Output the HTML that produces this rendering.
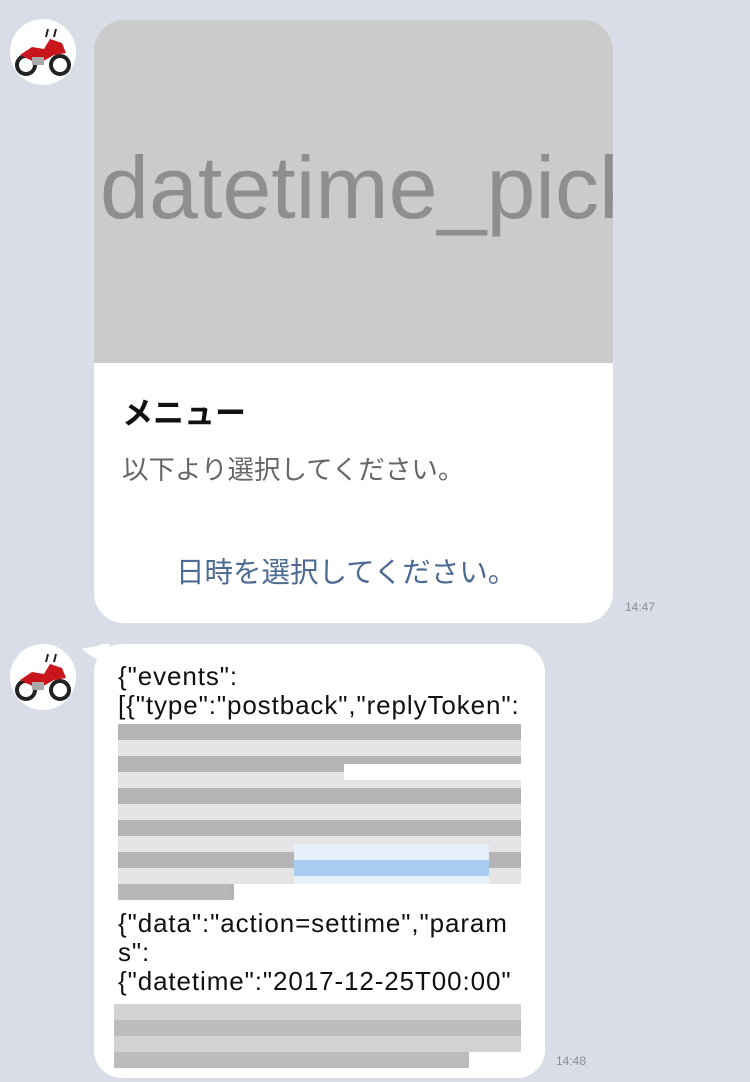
<!DOCTYPE html>
<html><head><meta charset="utf-8"><style>
*{margin:0;padding:0;box-sizing:border-box}
body{width:750px;height:1082px;background:#d9dde7;position:relative;overflow:hidden;font-family:"Liberation Sans","Noto Sans CJK JP",sans-serif}
.av{position:absolute;width:66px;height:66px;border-radius:50%;background:#fff;overflow:hidden}
.card{position:absolute;left:94px;top:20px;width:519px;height:603px;background:#fff;border-radius:30px;overflow:hidden}
.img{height:343px;background:#cbcbcb;overflow:hidden;position:relative}
.img span{position:absolute;left:6px;top:124px;font-size:88px;color:#8e8e8e;white-space:nowrap;line-height:1}
.t{position:absolute;font-size:12px;color:#8a8d94}
.b2{position:absolute;left:94px;top:644px;width:451px;height:434px;background:#fff;border-radius:28px}
.b2 .tx{position:absolute;left:24px;font-size:26px;letter-spacing:0.9px;color:#111;line-height:30px;white-space:nowrap}
</style></head><body>
<div class="av" style="left:10px;top:19px">
<svg width="66" height="66" viewBox="0 0 66 66"><circle cx="16" cy="46" r="9" fill="none" stroke="#222" stroke-width="4"/><circle cx="50" cy="46" r="9" fill="none" stroke="#222" stroke-width="4"/><path d="M10 36 L22 28 L34 30 L40 20 L52 24 L56 34 L44 36 L30 44 L18 40Z" fill="#c8161c"/><rect x="22" y="38" width="12" height="8" fill="#aaa"/><path d="M36 18 L38 10 M44 18 L46 10" stroke="#222" stroke-width="2"/></svg></div>
<div class="card">
<div class="img"><span>datetime_pick</span></div>
<div style="position:absolute;left:28px;top:368px;font-size:31px;font-weight:bold;color:#111">メニュー</div>
<div style="position:absolute;left:28px;top:428px;font-size:26.5px;color:#666">以下より選択してください。</div>
<div style="position:absolute;left:82px;top:530px;font-size:28.5px;color:#4d6a92;white-space:nowrap">日時を選択してください。</div>
</div>
<div class="t" style="left:625px;top:600px">14:47</div>
<div class="av" style="left:10px;top:644px">
<svg width="66" height="66" viewBox="0 0 66 66"><circle cx="16" cy="46" r="9" fill="none" stroke="#222" stroke-width="4"/><circle cx="50" cy="46" r="9" fill="none" stroke="#222" stroke-width="4"/><path d="M10 36 L22 28 L34 30 L40 20 L52 24 L56 34 L44 36 L30 44 L18 40Z" fill="#c8161c"/><rect x="22" y="38" width="12" height="8" fill="#aaa"/><path d="M36 18 L38 10 M44 18 L46 10" stroke="#222" stroke-width="2"/></svg></div>
<svg style="position:absolute;left:80px;top:644px" width="30" height="20"><path d="M2 4 Q14 4 22 0 L30 0 L30 18 Q12 16 2 4Z" fill="#fff"/></svg>
<div class="b2">
<div class="tx" style="top:17px">{"events":</div>
<div class="tx" style="top:46px">[{"type":"postback","replyToken":</div>
<div style="position:absolute;left:24px;top:80px;width:403px;height:176px;background:repeating-linear-gradient(180deg,#b4b4b4 0 16px,#e4e4e4 16px 32px)"></div>
<div style="position:absolute;left:250px;top:120px;width:180px;height:16px;background:#fff"></div>
<div style="position:absolute;left:200px;top:200px;width:195px;height:48px;background:linear-gradient(180deg,#e6f0fa 0 16px,#a8ccf0 16px 32px,#e8f2fb 32px 48px)"></div>
<div style="position:absolute;left:24px;top:240px;width:110px;height:16px;background:#b8b8b8"></div>
<div style="position:absolute;left:140px;top:240px;width:290px;height:16px;background:#fff"></div>
<div class="tx" style="top:264px">{"data":"action=settime","param</div>
<div class="tx" style="top:293px">s":</div>
<div class="tx" style="top:322px">{"datetime":"2017-12-25T00:00"</div>
<div style="position:absolute;left:20px;top:360px;width:407px;height:64px;background:repeating-linear-gradient(180deg,#d2d2d2 0 16px,#bcbcbc 16px 32px)"></div>
<div style="position:absolute;left:375px;top:408px;width:52px;height:16px;background:#fff"></div>
</div>
<div class="t" style="left:556px;top:1054px">14:48</div>
</body></html>
